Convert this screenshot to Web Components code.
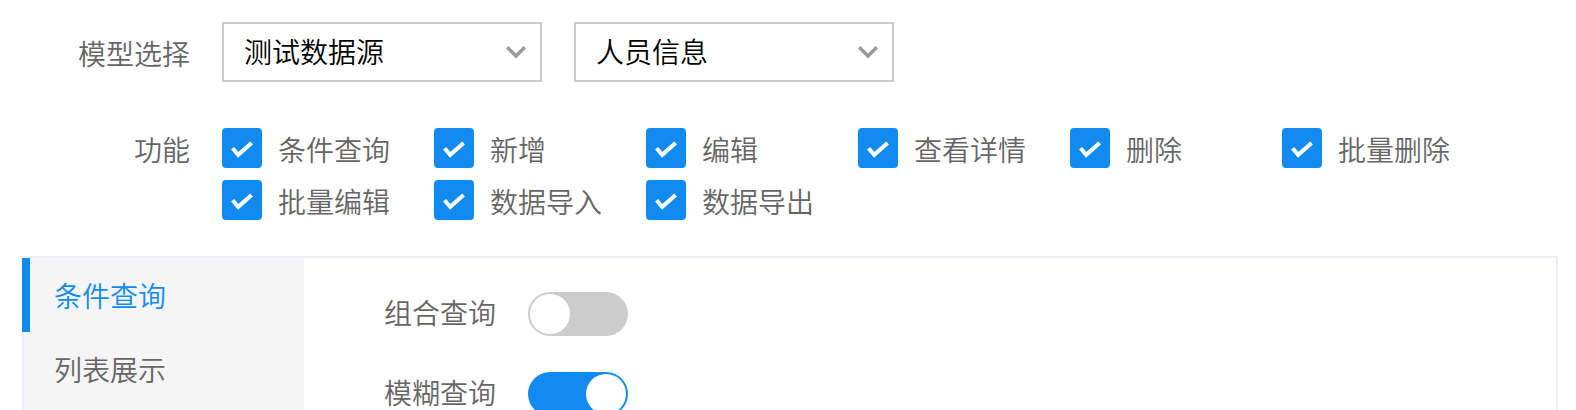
<!DOCTYPE html>
<html lang="zh-CN">
<head>
<meta charset="utf-8">
<meta name="viewport" content="width=device-width, initial-scale=1">
<title>模型选择</title>
<style>
  :root {
    --primary: #118bf0;
    --text: #666;
    --line: #ebeff5;
    --grey: #ccc;
    --label-width: 168px;
  }
  body {
    margin: 0;
    background: #fff;
    color: var(--text);
    font: 350 28px/40px "Noto Sans CJK SC", sans-serif;
  }
</style>
</head>
<body>
<model-settings></model-settings>

<template id="model-settings">
  <style>
    :host { display: block; padding: 22px 18px 22px 22px; }
    form-row + form-row { margin-top: 46px; }
    .selects { display: flex; flex-wrap: wrap; gap: 16px 32px; }
    .checks { display: grid; grid-template-columns: repeat(auto-fill, 212px); row-gap: 12px; }
    tab-panel { margin-top: 36px; }
    .switches { display: grid; gap: 36px; }
  </style>
  <form-row label="模型选择" tall>
    <div class="selects">
      <select-box label="数据源" options="测试数据源"></select-box>
      <select-box label="模型" options="人员信息"></select-box>
    </div>
  </form-row>
  <form-row label="功能">
    <div class="checks">
      <check-box label="条件查询"></check-box>
      <check-box label="新增"></check-box>
      <check-box label="编辑"></check-box>
      <check-box label="查看详情"></check-box>
      <check-box label="删除"></check-box>
      <check-box label="批量删除"></check-box>
      <check-box label="批量编辑"></check-box>
      <check-box label="数据导入"></check-box>
      <check-box label="数据导出"></check-box>
    </div>
  </form-row>
  <tab-panel>
    <tab-item slot="tabs" label="条件查询" active></tab-item>
    <tab-item slot="tabs" label="列表展示"></tab-item>
    <div class="switches">
      <toggle-switch label="组合查询"></toggle-switch>
      <toggle-switch label="模糊查询" checked></toggle-switch>
    </div>
  </tab-panel>
</template>

<template id="form-row">
  <style>
    :host { display: flex; gap: 32px; }
    .label { flex: none; width: var(--label-width); line-height: 42px; text-align: right; }
    .content { flex: 1; min-width: 0; }
    :host([tall]) .label { padding-top: 10px; }
  </style>
  <div class="label"></div>
  <div class="content"><slot></slot></div>
</template>

<template id="select-box">
  <style>
    :host { display: grid; width: 320px; align-items: center; }
    select, svg { grid-area: 1 / 1; }
    select {
      box-sizing: border-box; width: 100%; height: 60px; margin: 0; padding: 0 60px 2px 20px;
      border: 2px solid var(--grey); border-radius: 0; background: #fff; color: #000;
      font: inherit; appearance: none;
    }
    svg { justify-self: end; margin-right: 14px; pointer-events: none; }
  </style>
  <select></select>
  <svg width="24" height="24" viewBox="0 0 24 24" fill="none" stroke="#999" stroke-width="3.4" aria-hidden="true"><path d="M3.2 7.2 12 16l8.8-8.8"/></svg>
</template>

<template id="check-box">
  <style>
    :host { display: block; }
    label { display: flex; gap: 16px; height: 40px; }
    .box { display: grid; flex: none; width: 40px; height: 40px; }
    input, svg { grid-area: 1 / 1; }
    input { width: 40px; height: 40px; margin: 0; border-radius: 4px; background: var(--grey); appearance: none; }
    input:checked { background: var(--primary); }
    svg { pointer-events: none; }
    .text { line-height: 42px; }
  </style>
  <label>
    <span class="box">
      <input type="checkbox" checked>
      <svg width="40" height="40" viewBox="0 0 40 40" fill="none" stroke="#fff" stroke-width="4" aria-hidden="true"><path d="M10.6 20.2 16.2 26.8 29.6 15"/></svg>
    </span>
    <span class="text"></span>
  </label>
</template>

<template id="tab-panel">
  <style>
    :host { display: flex; border: 2px solid var(--line); }
    nav { flex: none; width: 282px; margin-left: -2px; background: #f5f5f5; box-shadow: inset 2px 0 var(--line); }
    .body { flex: 1; min-width: 0; padding: 34px 80px; }
  </style>
  <nav><slot name="tabs"></slot></nav>
  <div class="body"><slot></slot></div>
</template>

<template id="tab-item">
  <style>
    :host { display: block; }
    button {
      display: block; box-sizing: border-box; width: 100%; height: 74px; margin: 0; padding: 0 0 0 30px;
      border: 0 solid var(--line); border-left-width: 2px; background: none;
      color: inherit; font: inherit; text-align: left;
    }
    :host([active]) button { padding-left: 24px; border-left: 8px solid var(--primary); color: var(--primary); }
  </style>
  <button type="button"></button>
</template>

<template id="toggle-switch">
  <style>
    :host { display: block; }
    label { display: flex; gap: 32px; }
    input { display: flex; flex: none; box-sizing: border-box; width: 100px; height: 44px; margin: 0; padding: 2px; border-radius: 22px; background: var(--grey); appearance: none; }
    input::before { content: ""; width: 40px; height: 40px; border-radius: 50%; background: #fff; }
    input:checked { justify-content: flex-end; background: var(--primary); }
  </style>
  <label><span></span><input type="checkbox" role="switch"></label>
</template>

<script>
  class BaseElement extends HTMLElement {
    constructor() {
      super();
      const template = document.getElementById(this.localName);
      this.attachShadow({ mode: "open" }).append(template.content.cloneNode(true));
    }
    find(selector) { return this.shadowRoot.querySelector(selector); }
    get label() { return this.getAttribute("label"); }
  }

  customElements.define("form-row", class extends BaseElement {
    connectedCallback() {
      this.setAttribute("role", "group");
      this.setAttribute("aria-label", this.label);
      this.find(".label").textContent = this.label;
    }
  });
  customElements.define("select-box", class extends BaseElement {
    connectedCallback() {
      const select = this.find("select");
      select.setAttribute("aria-label", this.label);
      select.replaceChildren(...this.getAttribute("options").split(",").map(text => new Option(text)));
    }
  });
  customElements.define("check-box", class extends BaseElement {
    connectedCallback() { this.find(".text").textContent = this.label; }
  });
  customElements.define("tab-item", class extends BaseElement {
    connectedCallback() { this.find("button").textContent = this.label; }
  });
  customElements.define("tab-panel", class extends BaseElement {});
  customElements.define("toggle-switch", class extends BaseElement {
    connectedCallback() {
      this.find("span").textContent = this.label;
      this.find("input").checked = this.hasAttribute("checked");
    }
  });
  customElements.define("model-settings", class extends BaseElement {
    connectedCallback() {
      this.shadowRoot.querySelectorAll("tab-item").forEach((tab, i, tabs) => {
        tab.addEventListener("click", () => tabs.forEach(t => t.toggleAttribute("active", t === tab)));
      });
    }
  });
</script>
</body>
</html>
